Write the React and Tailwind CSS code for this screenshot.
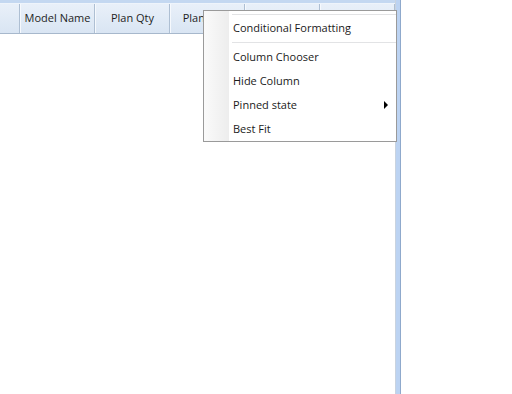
import React from "react";

const cols = ["Model Name", "Plan Qty", "Plan Start", "", ""];

export default function App() {
  return (
    <div className="relative w-[512px] h-[394px] bg-white overflow-hidden" style={{ fontFamily: '"Open Sans", "Noto Sans", sans-serif' }}>
      <div className="flex h-full">
        <div className="w-[396px] h-full flex flex-col border-r border-[#c9d3df]">
          <div className="h-[3px] bg-[#c4d8f1]" />
          <div className="h-[31px] flex border-t border-[#eef4fb] border-b border-b-[#a7b8cc] bg-gradient-to-b from-[#e9f0f9] to-[#d9e5f3]">
            <div className="w-[21px] border-r border-[#aebfd3]" />
            {cols.map((c, i) => (
              <div key={i} className="w-[75px] shrink-0 border-r border-[#aebfd3] flex items-center justify-center text-[11px] text-[#1e1e1e] border-l border-l-[#f6f9fd] overflow-hidden whitespace-nowrap">
                {c}
              </div>
            ))}
          </div>
          <div className="flex-1 bg-white" />
        </div>
        <div className="w-[5px] h-full bg-[#bcd3f2] border-r border-[#8fa9cc]" />
        <div className="flex-1" />
      </div>

      <div className="absolute left-[203px] top-[10px] w-[194px] h-[132px] bg-white border border-[#9a9a9a] flex">
        <div className="w-[25px] h-full bg-gradient-to-r from-[#fafafa] to-[#ededed]" />
        <div className="flex-1 flex flex-col pl-[3px] text-[11px] text-[#1a1a1a]">
          <div className="h-[4px] border-b border-[#e2e3e5]" />
          <div className="h-[27px] flex items-center pl-[1px]">Conditional Formatting</div>
          <div className="h-[2px] border-t border-[#e2e3e5] border-b border-b-white" />
          <div className="h-[24px] flex items-center pl-[1px] mt-[1px]">Column Chooser</div>
          <div className="h-[24px] flex items-center pl-[1px]">Hide Column</div>
          <div className="h-[24px] flex items-center pl-[1px] justify-between pr-[8px]">
            <span>Pinned state</span>
            <span className="w-0 h-0 border-y-[4px] border-y-transparent border-l-[4px] border-l-black" />
          </div>
          <div className="h-[24px] flex items-center pl-[1px]">Best Fit</div>
        </div>
      </div>
    </div>
  );
}
